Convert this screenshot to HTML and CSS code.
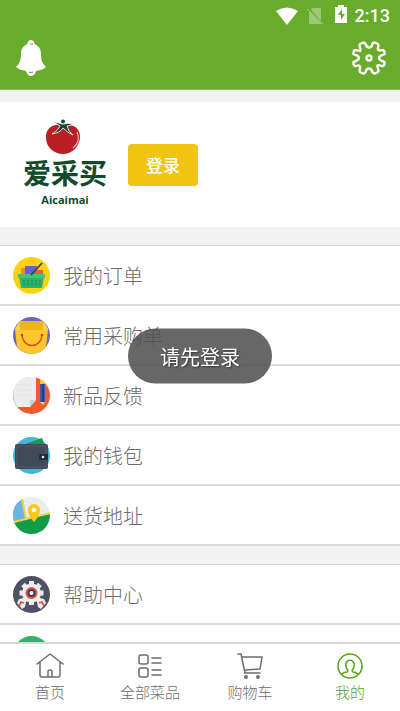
FILE: index.html
```html
<!DOCTYPE html>
<html lang="zh-CN">
<head>
<meta charset="UTF-8">
<meta name="viewport" content="width=device-width, initial-scale=1.0">
<title>我的</title>
<link rel="stylesheet" href="styles.css">
</head>
<body>
<header class="header">
  <div class="status">
    <svg width="24" height="18" viewBox="0 0 24 18"><path d="M1 4Q12-3 23 4L12 18z" fill="#fff"/></svg>
    <svg class="sim" width="16" height="18" viewBox="0 0 16 18"><path d="M5 1h8q1 0 1 1v12L4 3zM2 4l13 13H3q-1 0-1-1z" fill="#fff" opacity=".35"/><path d="M0 2l16 15" stroke="#fff" opacity=".4"/></svg>
    <svg class="battery" width="12" height="18" viewBox="0 0 12 18"><path d="M0 2h3V0h6v2h3v16H0z" fill="#fff"/><path d="M7 4L3 10h3v5l4-6H7z" fill="#69ab2b"/></svg>
    <span class="time">2:13</span>
  </div>
  <div class="toolbar">
    <button class="icon-btn" type="button" aria-label="消息">
      <svg width="30" height="36" viewBox="0 0 30 36"><path d="M15 0c2 0 3.500 1.500 3.500 4C23 6 25 9 25 14c0 6 1 9 5 13-2 2-5 3-10 4-1 3-2.500 5-5 5s-4-2-5-5c-5-1-8-2-10-4 4-4 5-7 5-13 0-5 2-8 6.500-10C11.500 1.500 13 0 15 0z" fill="#fff"/><path d="M14 4h3M13 32q2 1 4 0" fill="none" stroke="#69ab2b" stroke-width="1.200"/></svg>
    </button>
    <button class="icon-btn" type="button" aria-label="设置">
      <svg width="34" height="34" viewBox="0 0 34 34" fill="none" stroke="#fff" stroke-width="2.400" stroke-linejoin="round"><path d="M17 6.500Q19.500 6.500 20 4T23 1.500L26 3Q27 4 26 6.500T28 9.500Q32 8 32.500 11L32.500 13Q27 15 27 17T32.500 21L32.500 23Q32 26 28 24.500T26 27.500Q27 30 26 31L23 32.500Q21 32.500 20 30T17 27.500Q14.500 27.500 14 30T11 32.500L8 31Q7 30 8 27.500T6 24.500Q2 26 1.500 23L1.500 21Q7 19 7 17T1.500 13L1.500 11Q2 8 6 9.500T8 6.500Q7 4 8 3L11 1.500Q13 1.500 14 4T17 6.500z"/><circle cx="17" cy="17" r="2.500"/></svg>
    </button>
  </div>
</header>

<main class="content">
  <section class="profile">
    <div class="logo">
      <svg width="40" height="36" viewBox="0 0 40 36">
        <path d="M18 7C26 3 36 9 35 19c-1 9-8 16-17 16S1 28 1 19C0 9 10 3 18 7z" fill="#b91f25"/>
        <path d="M32 13c3 6 1 12-4 16" fill="none" stroke="#f0b5b1" stroke-width="1.300"/>
        <path d="M17 5Q12 3 7 3q4 1 8 4-2 5-8 8 8-1 11-6 5 5 10 7-5-4-6-9 3-1 7-1-6-3-10-1z" fill="#124b2b" stroke="#fff" stroke-width=".8"/><circle cx="18" cy="2.500" r="2" fill="#124b2b"/>
      </svg>
      <strong class="brand">爱采买</strong>
      <span class="brand-en">Aicaimai</span>
    </div>
    <button class="login" type="button">登录</button>
  </section>

  <nav class="menu">
    <a class="row" href="#orders">
      <svg class="pic" viewBox="0 0 37 37"><circle cx="18.500" cy="18.500" r="18.500" fill="#fdd20b"/><path d="M8 11h8v8H8z" fill="#f58a22"/><path d="M12 9h12v10H12z" fill="#6465cb"/><path d="M22 13h8v6h-8z" fill="#ed5b35"/><path d="M6 19h25l-2 12H8z" fill="#2cb36b"/><path d="M5 17h27v4H5z" fill="#43c47c"/><path d="M11 23v6M15 23v6M19 23v6M23 23v6M27 23v6" stroke="#16814b" stroke-dasharray="2 1"/><path d="M18 18L29 6" stroke="#424047" stroke-width="1.800"/></svg>
      <span>我的订单</span>
    </a>
    <a class="row" href="#frequent">
      <svg class="pic" viewBox="0 0 37 37"><circle cx="18.500" cy="18.500" r="18.500" fill="#6668c5"/><path d="M7 4h23l5 8-2 18q-6 7-14.500 7T4 30L2 12z" fill="#fdc72f"/><path d="M7 4h23l1 9H6z" fill="#edb521"/><path d="M6 5L2 12l5 1zM31 5l4 7-5 1z" fill="#ffd34b"/><path d="M9 18c1 14 19 14 20 0" fill="none" stroke="#d9531d" stroke-width="1.400"/><circle cx="9" cy="18" r="1.300" fill="#b64622"/><circle cx="29" cy="18" r="1.300" fill="#b64622"/></svg>
      <span>常用采购单</span>
    </a>
    <a class="row" href="#feedback">
      <svg class="pic" viewBox="0 0 37 37"><circle cx="18.500" cy="18.500" r="18.500" fill="#f1592f"/><path d="M23 0v23l-6 7H4C-3 19-1 2 16 0q4 0 7 0z" fill="#ececec"/><path d="M23 23l-6 7v-7z" fill="#cfcfcf"/><path d="M5 8h14M4 13h15M3 18h16" stroke="#e4e4e4"/><path d="M27 7h5v18h-5z" fill="#3d5aa8"/><path d="M30 7v18" stroke="#293f83" stroke-width="2"/><path d="M27 7V3l3 0 2 4z" fill="#f8c72c"/><path d="M27 25h5l-2 3z" fill="#e9c9ae"/></svg>
      <span>新品反馈</span>
    </a>
    <a class="row" href="#wallet">
      <svg class="pic" viewBox="0 0 37 37"><circle cx="18.500" cy="18.500" r="18.500" fill="#43b5de"/><path d="M9 8l20-7 3 8z" fill="#159b50"/><rect x="2" y="7" width="33" height="25" rx="2" fill="#424a59"/><rect x="4" y="9" width="29" height="21" fill="none" stroke="#697080" stroke-width=".7" stroke-dasharray="1.500 1"/><path d="M27 17h8v6h-8q-2-3 0-6z" fill="#242b38"/><circle cx="30" cy="20" r="1.300" fill="#e4e7ea"/></svg>
      <span>我的钱包</span>
    </a>
    <a class="row" href="#address">
      <svg class="pic" viewBox="0 0 37 37"><circle cx="18.500" cy="18.500" r="18.500" fill="#eceeee"/><path d="M10 2l3 20-12 3C-2 15 1 6 10 2z" fill="#68b5e8"/><path d="M1 25l36-8c0 12-8 20-18.500 20Q6 37 1 25z" fill="#119c49"/><path d="M9 2l4 20M1 25l36-9" fill="none" stroke="#f5d43b" stroke-width="2"/><path d="M14 4l17 11M24 2l-6 15" stroke="#dfe3e3"/><path d="M21 25q-6-7-6-12a6 6 0 0 1 12 0q0 5-6 12z" fill="#fac914"/><circle cx="21" cy="13" r="2.300" fill="#fff"/></svg>
      <span>送货地址</span>
    </a>
  </nav>

  <nav class="menu">
    <a class="row" href="#help">
      <svg class="pic" viewBox="0 0 37 37"><circle cx="18.500" cy="18.500" r="18.500" fill="#4c5264"/><circle cx="18.500" cy="17" r="9.500" fill="#eee"/><path d="M18.500 5v24M6.500 17h24M10 8.500l17 17M27 8.500l-17 17" stroke="#eee" stroke-width="5"/><circle cx="18.500" cy="17" r="5" fill="#394056" stroke="#e65336" stroke-width="2"/><circle cx="18.500" cy="17" r="2" fill="#fff"/><path d="M4 27l2-4 5-1 2 4-1 5-3 2zM33 27l-2-4-5-1-2 4 1 5 3 2z" fill="#eee"/><path d="M6 30l2-4 3 1M31 30l-2-4-3 1" fill="none" stroke="#e65336" stroke-width="1.800"/></svg>
      <span>帮助中心</span>
    </a>
    <div class="row">
      <svg class="pic" viewBox="0 0 37 37"><circle cx="18.500" cy="18.500" r="18.500" fill="#30b16c"/></svg>
    </div>
  </nav>
</main>

<nav class="tabbar">
  <a class="tab" href="#home">
    <svg width="28" height="26" viewBox="0 0 28 26"><path d="M1 11L14 1l13 10M4 9v13q0 2 2 2h16q2 0 2-2V9M12 24v-6q0-1 2-1t2 1v6"/></svg>
    <span>首页</span>
  </a>
  <a class="tab" href="#all">
    <svg width="28" height="26" viewBox="0 0 28 26"><rect x="3" y="2" width="9" height="9" rx="2"/><rect x="3" y="15" width="9" height="9" rx="2"/><path d="M16 5h9M16 10h9M16 17h9M16 22h9"/></svg>
    <span>全部菜品</span>
  </a>
  <a class="tab" href="#cart">
    <svg width="28" height="26" viewBox="0 0 28 26"><path d="M2 1h3l4 19h15M6 4h20l-2 12-15 1"/><circle cx="10" cy="24" r="1.200" fill="currentColor"/><circle cx="22" cy="24" r="1.200" fill="currentColor"/></svg>
    <span>购物车</span>
  </a>
  <a class="tab active" href="#mine">
    <svg width="28" height="26" viewBox="0 0 28 26"><circle cx="14" cy="13" r="12"/><path d="M6 21q2-2 5-2c2-1 0-3-1-5-2-9 10-9 8 0-1 2-3 4-1 5q3 0 5 2"/></svg>
    <span>我的</span>
  </a>
</nav>

<div class="toast" role="status">请先登录</div>
</body>
</html>
```

FILE: styles.css
```css
* {
  box-sizing: border-box;
}

body {
  margin: 0;
  height: 100vh;
  display: flex;
  flex-direction: column;
  overflow: hidden;
  background: #f2f2f2;
  color: #6c6c70;
  font-family: "Noto Sans CJK SC", sans-serif;
  font-weight: 300;
}

button {
  border: 0;
  padding: 0;
  font-family: inherit;
  cursor: pointer;
}

a {
  color: inherit;
  text-decoration: none;
}

svg {
  display: block;
}

/* green top area */
.header {
  flex: none;
  background: #69ab2b;
  border-bottom: 1px solid #8bb860;
}

.status {
  height: 32px;
  padding: 0 10px;
  display: flex;
  align-items: center;
  justify-content: flex-end;
  gap: 8px;
}

.battery {
  margin: 0 0 4px 4px;
}

.time {
  color: #fff;
  font: 500 18px/32px Roboto, sans-serif;
}

.toolbar {
  display: flex;
  align-items: center;
  justify-content: space-between;
  padding: 8px 14px 13px 16px;
}

.icon-btn {
  background: none;
}

/* scrolling part */
.content {
  flex: 1;
  min-height: 0;
  overflow: hidden;
}

.profile {
  display: flex;
  align-items: center;
  gap: 21px;
  height: 125px;
  margin-top: 12px;
  padding: 0 23px;
  background: #fff;
}

.logo {
  display: flex;
  flex-direction: column;
  align-items: center;
  padding-bottom: 4px;
  color: #124b2b;
}

.brand {
  font-size: 28px;
  font-weight: 700;
  line-height: 34px;
}

.brand-en {
  margin-top: 4px;
  font: bold 11px/14px "Open Sans", sans-serif;
}

.login {
  width: 70px;
  height: 42px;
  border-radius: 4px;
  background: #f1c40f;
  color: #fff;
  font-size: 17px;
  font-weight: 500;
}

.menu {
  margin-top: 18px;
  border-top: 1px solid #d0d0d0;
}

.row {
  display: flex;
  align-items: center;
  gap: 13px;
  height: 60px;
  padding: 0 13px;
  background: #fff;
  border-bottom: 2px solid #dcdcdc;
  font-size: 20px;
}

.pic {
  width: 37px;
  height: 37px;
}

/* bottom tabs */
.tabbar {
  flex: none;
  display: flex;
  height: 69px;
  padding-top: 9px;
  background: #fff;
  border-top: 2px solid #d6d6d6;
}

.tab {
  flex: 1;
  display: flex;
  flex-direction: column;
  align-items: center;
  gap: 3px;
  font-size: 15px;
  line-height: 20px;
}

.tab svg {
  fill: none;
  stroke: currentColor;
  stroke-width: 1.5;
  stroke-linecap: round;
  stroke-linejoin: round;
}

.active {
  color: #5aa01c;
}

.toast {
  position: fixed;
  top: 50%;
  left: 50%;
  transform: translate(-50%, -50%);
  padding: 0 32px;
  border-radius: 28px;
  background: rgba(80, 80, 80, 0.87);
  color: #fff;
  font-size: 20px;
  font-weight: 400;
  line-height: 55px;
  text-shadow: 1px 1px 2px #333;
  white-space: nowrap;
}
```
